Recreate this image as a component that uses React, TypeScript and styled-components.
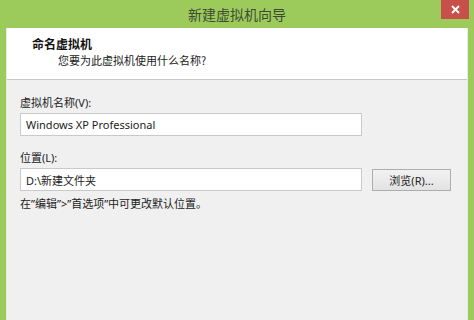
import React from "react";
import styled, { createGlobalStyle } from "styled-components";

const Global = createGlobalStyle`
  html, body { margin: 0; padding: 0; }
  body { width: 474px; height: 320px; overflow: hidden; background: #9ccb5b; }
`;

const FONT = `"Noto Sans", "Noto Sans CJK SC", sans-serif`;

const Window = styled.div`
  width: 474px;
  height: 320px;
  background: #9ccb5b;
  display: flex;
  flex-direction: column;
  font-family: ${FONT};
  overflow: hidden;
`;

const TitleBar = styled.div`
  height: 28px;
  flex: none;
  display: flex;
  align-items: center;
  justify-content: center;
  position: relative;
`;

const Title = styled.div`
  font-family: "Noto Sans CJK SC", sans-serif;
  font-size: 14px;
  color: #3f4a36;
  margin-top: -1px;
`;

const Close = styled.div`
  position: absolute;
  left: 441px;
  top: 0;
  width: 28px;
  height: 19px;
  background: #c7504b;
  display: flex;
  align-items: center;
  justify-content: center;
`;

const Client = styled.div`
  flex: 1;
  margin: 0 6px 0 6px;
  border-left: 1px solid #e4efd8;
  border-right: 1px solid #e4efd8;
  display: flex;
  flex-direction: column;
  background: #f0f0f0;
`;

const Header = styled.div`
  background: #ffffff;
  height: 52px;
  border-bottom: 1px solid #c8c8c8;
  padding: 8px 0 0 25px;
  box-sizing: border-box;
  display: flex;
  flex-direction: column;
  flex: none;
`;

const HeaderTitle = styled.div`
  font-family: "Noto Sans CJK SC", sans-serif;
  font-weight: bold;
  font-size: 12px;
  line-height: 16px;
  color: #111;
`;

const HeaderSub = styled.div`
  font-family: "Noto Sans CJK SC", sans-serif;
  font-size: 11px;
  line-height: 16px;
  color: #222;
  padding-left: 26px;
`;

const Body = styled.div`
  padding: 15px 0 0 13px;
  display: flex;
  flex-direction: column;
`;

const Label = styled.div<{ $gap?: number }>`
  font-family: "Noto Sans", "Noto Sans CJK SC", sans-serif;
  font-size: 11px;
  line-height: 16px;
  color: #222;
  margin-top: ${(p) => p.$gap ?? 0}px;
  margin-bottom: 2px;
`;

const Row = styled.div`
  display: flex;
  align-items: center;
  gap: 10px;
`;

const Input = styled.div`
  width: 342px;
  height: 23px;
  box-sizing: border-box;
  background: #fff;
  border: 1px solid #c9c9c9;
  padding-left: 5px;
  display: flex;
  align-items: center;
  font-family: "Noto Sans", "Noto Sans CJK SC", sans-serif;
  font-size: 11px;
  color: #222;
`;

const Button = styled.div`
  width: 79px;
  height: 22px;
  box-sizing: border-box;
  border: 1px solid #adadad;
  background: linear-gradient(#f2f2f2, #e3e3e3);
  display: flex;
  align-items: center;
  justify-content: center;
  font-family: "Noto Sans", "Noto Sans CJK SC", sans-serif;
  font-size: 11px;
  color: #222;
`;

const Hint = styled.div`
  font-family: "Noto Sans", "Noto Sans CJK SC", sans-serif;
  font-size: 11px;
  line-height: 16px;
  color: #222;
  margin-top: 5px;
`;

export default function App() {
  return (
    <>
      <Global />
      <Window>
        <TitleBar>
          <Title>新建虚拟机向导</Title>
          <Close>
            <svg width="9" height="9" viewBox="0 0 9 9">
              <path d="M1 1 L8 8 M8 1 L1 8" stroke="#fff" strokeWidth="1.8" />
            </svg>
          </Close>
        </TitleBar>
        <Client>
          <Header>
            <HeaderTitle>命名虚拟机</HeaderTitle>
            <HeaderSub>您要为此虚拟机使用什么名称?</HeaderSub>
          </Header>
          <Body>
            <Label>虚拟机名称(V):</Label>
            <Input>Windows XP Professional</Input>
            <Label $gap={14}>位置(L):</Label>
            <Row>
              <Input>D:\新建文件夹</Input>
              <Button>浏览(R)...</Button>
            </Row>
            <Hint>{"在\u201D编辑\u201D>\u201D首选项\u201D中可更改默认位置。"}</Hint>
          </Body>
        </Client>
      </Window>
    </>
  );
}
